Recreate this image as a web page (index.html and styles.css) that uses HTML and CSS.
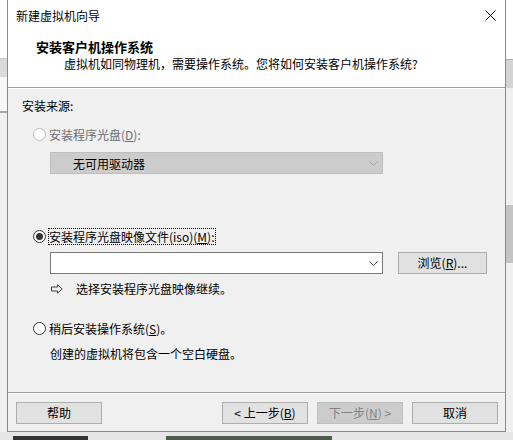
FILE: index.html
```html
<!DOCTYPE html>
<html lang="zh-CN">
  <head>
    <meta charset="utf-8" />
    <title>新建虚拟机向导</title>
    <link rel="stylesheet" href="styles.css">
  </head>

  <body>
    <div class="desk">
      <!-- bits of the window behind, left edge -->
      <div class="side">
        <div class="blk blk-top"></div>
        <div class="blk blk-link"></div>
        <div class="blk blk-bar"></div>
        <div class="blk blk-search"></div>
        <div class="blk blk-rest"></div>
      </div>

      <section class="dialog">
        <div class="titlebar">
          <span>新建虚拟机向导</span>
          <svg class="close" width="11" height="11" viewBox="0 0 11 11">
            <path d="M0.5,0.5 10.5,10.5 M10.5,0.5 0.5,10.5" stroke="#000" stroke-width="1" />
          </svg>
        </div>

        <header class="header">
          <h1>安装客户机操作系统</h1>
          <p>虚拟机如同物理机，需要操作系统。您将如何安装客户机操作系统?</p>
        </header>
        <div class="rule"></div>

        <div class="content">
          <div class="group-label">安装来源:</div>

          <div class="choice choice-disc disabled">
            <span class="radio"></span>
            <span class="label">安装程序光盘(<u>D</u>):</span>
          </div>
          <div class="combo combo-disabled">
            <span>无可用驱动器</span>
            <svg width="9" height="5" viewBox="0 0 9 5">
              <path d="M0.5,0.5 4.5,4.5 8.5,0.5" fill="none" stroke="#a8a8a8" />
            </svg>
          </div>

          <div class="choice choice-iso">
            <span class="radio checked"></span>
            <span class="label focus">安装程序光盘映像文件(iso)(<u>M</u>):</span>
          </div>
          <div class="file-row">
            <div class="combo">
              <span></span>
              <svg width="9" height="5" viewBox="0 0 9 5">
                <path d="M0.5,0.5 4.5,4.5 8.5,0.5" fill="none" stroke="#444" />
              </svg>
            </div>
            <button class="btn btn-browse">浏览(<u>R</u>)...</button>
          </div>
          <div class="hint">
            <svg width="12" height="10" viewBox="0 0 12 10">
              <path d="M0.5,3 H6.5 V0.8 L11.2,5 L6.5,9.2 V7 H0.5 Z" fill="none" stroke="#3c3c3c" />
            </svg>
            <span>选择安装程序光盘映像继续。</span>
          </div>

          <div class="choice choice-later">
            <span class="radio"></span>
            <span class="label">稍后安装操作系统(<u>S</u>)。</span>
          </div>
          <p class="note">创建的虚拟机将包含一个空白硬盘。</p>
        </div>

        <div class="rule"></div>
        <footer class="buttons">
          <button class="btn">帮助</button>
          <div class="spacer"></div>
          <div class="nav">
            <button class="btn">&lt; 上一步(<u>B</u>)</button>
            <button class="btn btn-disabled">下一步(<u>N</u>) &gt;</button>
            <button class="btn">取消</button>
          </div>
        </footer>
      </section>

      <!-- bits of the window behind, right edge -->
      <div class="side">
        <div class="blk blk-top"></div>
        <div class="blk blk-icon"></div>
        <div class="blk blk-tab"></div>
        <div class="blk blk-pane"></div>
        <div class="blk blk-dark"></div>
        <div class="blk blk-rest"></div>
      </div>
    </div>

    <div class="under">
      <div class="strip strip-a"></div>
      <div class="strip strip-b"></div>
    </div>
  </body>
</html>
```

FILE: styles.css
```css
html,
body {
  margin: 0;
  padding: 0;
}

body {
  width: 513px;
  height: 440px;
  overflow: hidden;
  background: #f0f0f0;
  font-family: 'Noto Sans CJK SC', 'Microsoft YaHei', sans-serif;
  font-size: 12px;
  line-height: 17px;
  color: #000;
}

u {
  text-decoration: underline;
  text-underline-offset: 1px;
}

/* background window pieces */
.desk {
  display: flex;
  height: 432px;
}

.side {
  width: 7px;
  display: flex;
  flex-direction: column;
}

.blk-top {
  height: 28px;
  background: #fff;
}

.blk-link {
  height: 30px;
  background: #fff;
  border-bottom: 1px solid #c8c8c8;
}

.blk-bar {
  height: 18px;
  background: #dadada;
}

.blk-search {
  height: 34px;
  background: #f7f7f7;
  border-bottom: 2px solid #a8a8a8;
}

.blk-rest {
  flex: 1;
  background: #f0f0f0;
}

.blk-icon {
  height: 31px;
  background: #fff;
  border-bottom: 1px solid #b0b0b0;
}

.blk-tab {
  height: 28px;
  background: #d4d4d4;
}

.blk-pane {
  height: 117px;
  background: #f0f0f0;
}

.blk-dark {
  height: 58px;
  background: #c4c4c4;
}

.under {
  display: flex;
  height: 8px;
  background: #e6e6e6;
  align-items: flex-end;
}

.strip {
  height: 4px;
}

.strip-a {
  width: 75px;
  margin-left: 13px;
  background: #333;
}

.strip-b {
  width: 166px;
  margin-left: 78px;
  background: #4a5e48;
}

/* dialog */
.dialog {
  width: 499px;
  box-sizing: border-box;
  border: 1px solid #8a8a8a;
  border-top: 0;
  display: flex;
  flex-direction: column;
  background: #f0f0f0;
}

.titlebar {
  height: 30px;
  background: #fff;
  display: flex;
  align-items: center;
  justify-content: space-between;
  padding: 0 9px 0 8px;
}

.header {
  height: 57px;
  box-sizing: border-box;
  padding-top: 8px;
  background: #fff;
}

.header h1 {
  margin: 0;
  padding-left: 28px;
  font-size: 13px;
  font-weight: bold;
  line-height: 17px;
}

.header p {
  margin: 0;
  padding-left: 56px;
}

.rule {
  height: 1px;
  background: #a0a0a0;
  border-bottom: 1px solid #fff;
}

.content {
  flex: 1;
  padding: 8px 0 0 14px;
}

.choice {
  display: flex;
  align-items: center;
  margin-left: 11px;
  height: 17px;
}

.choice-disc {
  margin-top: 12px;
}

.choice-iso {
  margin-top: 54px;
}

.choice-later {
  margin-top: 23px;
}

.radio {
  width: 13px;
  height: 13px;
  box-sizing: border-box;
  border: 1px solid #333;
  border-radius: 50%;
  background: #fff;
  margin-right: 2px;
  display: flex;
  align-items: center;
  justify-content: center;
}

.radio.checked::after {
  content: '';
  width: 7px;
  height: 7px;
  border-radius: 50%;
  background: #333;
}

.label {
  line-height: 15px;
  border: 1px solid transparent;
}

.label.focus {
  border: 1px dotted #000;
}

.disabled .radio {
  border-color: #bcbcbc;
}

.disabled .label {
  color: #6d6d6d;
}

.combo {
  width: 333px;
  height: 22px;
  box-sizing: border-box;
  border: 1px solid #7a7a7a;
  background: #fff;
  display: flex;
  align-items: center;
  justify-content: space-between;
  padding: 0 4px 0 22px;
}

.combo-disabled {
  margin: 9px 0 0 28px;
  background: #cccccc;
  border-color: #bfbfbf;
}

.file-row {
  display: flex;
  margin: 7px 0 0 28px;
  gap: 15px;
}

.btn {
  width: 86px;
  height: 22px;
  box-sizing: border-box;
  border: 1px solid #adadad;
  background: #e1e1e1;
  font: inherit;
  line-height: 18px;
  color: #000;
  padding: 0;
  text-align: center;
}

.btn-browse {
  width: 89px;
}

.btn-disabled {
  background: #cccccc;
  border-color: #bfbfbf;
  color: #838383;
}

.hint {
  display: flex;
  align-items: center;
  margin: 6px 0 0 29px;
  gap: 13px;
}

.note {
  margin: 8px 0 0 28px;
}

.buttons {
  display: flex;
  padding: 8px 7px 7px 8px;
}

.spacer {
  flex: 1;
}

.nav {
  display: flex;
  gap: 9px;
}
```
